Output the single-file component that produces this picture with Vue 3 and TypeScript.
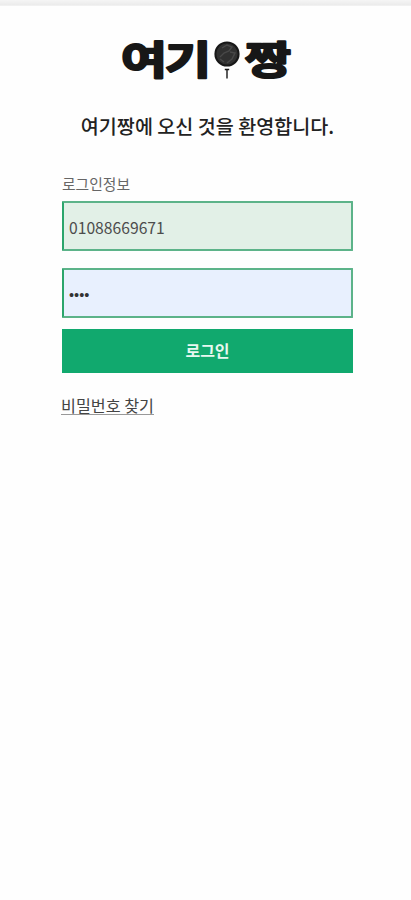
<template>
  <div class="login-page">
    <div class="top-line"></div>
    <main class="login">
      <h1 class="logo">
        <svg width="180" height="72" viewBox="-4 -18 180 72" role="img" aria-label="여기짱">
          <g class="logo-text">
            <text x="-1" y="36" textLength="46" lengthAdjust="spacingAndGlyphs">여</text>
            <text x="43" y="36" textLength="46" lengthAdjust="spacingAndGlyphs">기</text>
            <text x="123" y="36" textLength="46" lengthAdjust="spacingAndGlyphs">짱</text>
          </g>
          <!-- 풍선 -->
          <circle cx="105" cy="16" r="11.6" fill="#303030" stroke="#171717" stroke-width="2" />
          <path d="M100 10l5-3 5 2-3 4-5 2-4 4M108 14l5 1-3 6-5 4M98 21l4 3" fill="none" stroke="#484848" stroke-width="1.4" />
          <path d="M102.8 31.5h4.4M105 31.5v9" fill="none" stroke="#171717" stroke-width="1.4" />
        </svg>
      </h1>
      <h2 class="welcome">여기짱에 오신 것을 환영합니다.</h2>
      <form @submit.prevent="login">
        <label class="label" for="phone">로그인정보</label>
        <input id="phone" v-model="phone" class="field phone" type="text" autocomplete="off" />
        <input v-model="password" class="field password" type="password" aria-label="비밀번호" />
        <button class="submit" type="submit">로그인</button>
      </form>
      <a class="find" href="#" @click.prevent>비밀번호 찾기</a>
    </main>
  </div>
</template>

<script setup lang="ts">
import { ref } from 'vue'

const phone = ref('01088669671')
const password = ref('1234')

const login = () => {
  if (!phone.value || !password.value) {
    return
  }
}
</script>

<style>
body {
  margin: 0;
  background: #fefefe;
}
</style>

<style scoped>
.login-page {
  min-height: 900px;
  background: #fefefe;
  font-family: "Noto Sans CJK KR", sans-serif;
}

.top-line {
  height: 6px;
  background: linear-gradient(#f5f5f5, #ebebeb 85%, #f8f8f8);
}

.login {
  width: 291px;
  margin-left: 62px;
}

.logo {
  display: flex;
  justify-content: center;
  margin: 0;
  padding-top: 14px;
}

.logo-text {
  font-size: 38.5px;
  font-weight: 700;
  fill: #171717;
  stroke: #171717;
  stroke-width: 2.2;
  stroke-linejoin: round;
}

.welcome {
  margin: 20px 0 0;
  font-size: 19.6px;
  font-weight: 500;
  line-height: 28px;
  text-align: center;
  white-space: nowrap;
  color: #222;
}

form {
  display: flex;
  flex-direction: column;
}

.label {
  margin-top: 34px;
  font-size: 14.8px;
  line-height: 20px;
  color: #666;
}

.field {
  box-sizing: border-box;
  width: 291px;
  height: 50px;
  margin: 0;
  padding: 0 5px;
  border: 2px solid #5cb389;
  border-left-color: #2ba56c;
  border-radius: 1px;
  outline: none;
  font-family: inherit;
  font-size: 15.7px;
  color: #4c4c4c;
}

.phone {
  margin-top: 7px;
  padding-top: 2px;
  background: #e2f0e7;
}

.password {
  margin-top: 17px;
  padding-top: 3px;
  background: #e8f0fe;
  font-family: "Liberation Sans", sans-serif;
  font-size: 14.5px;
  color: #333;
}

.submit {
  height: 44px;
  margin-top: 11px;
  padding: 0 0 2px;
  border: 0;
  background: #11a96e;
  font-family: inherit;
  font-size: 16px;
  font-weight: 700;
  color: #e8f8f0;
}

.find {
  display: inline-block;
  margin-top: 23px;
  margin-left: -1px;
  border-bottom: 1px solid #999;
  font-size: 16.2px;
  line-height: 18px;
  text-decoration: none;
  color: #444;
}
</style>
